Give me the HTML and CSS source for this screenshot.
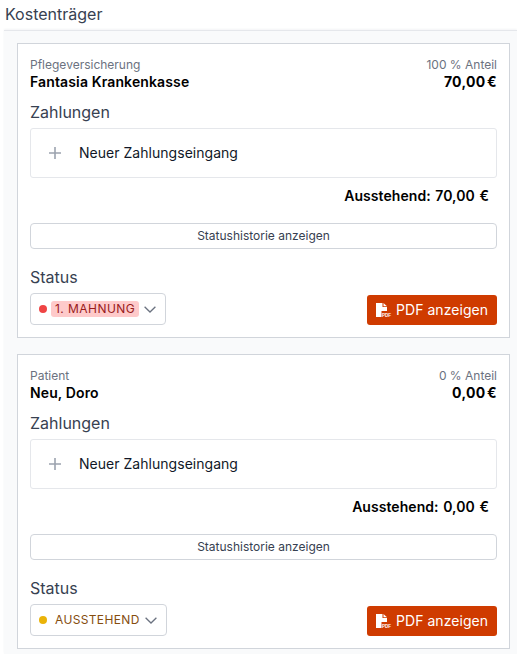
FILE: index.html
```html
<!DOCTYPE html>
<html lang="de">
<head>
<meta charset="utf-8">
<title>Kostenträger</title>
<link rel="stylesheet" href="styles.css">
</head>
<body>
<h2 class="title">Kostenträger</h2>
<div class="panel">
  <section class="card">
    <div class="head">
      <div class="head-side">
        <div class="muted">Pflegeversicherung</div>
        <div class="strong">Fantasia Krankenkasse</div>
      </div>
      <div class="head-side right">
        <div class="muted">100 % Anteil</div>
        <div class="strong price">70,00 €</div>
      </div>
    </div>
    <h3 class="label pay-label">Zahlungen</h3>
    <div class="add-box">
      <svg class="plus" width="14" height="14" viewBox="0 0 14 14"><path d="M7 1v12M1 7h12" fill="none" stroke="#9ca3af" stroke-width="1.6"/></svg>
      <span class="add-text">Neuer Zahlungseingang</span>
    </div>
    <div class="due">Ausstehend: 70,00 €</div>
    <button class="history">Statushistorie anzeigen</button>
    <h3 class="label status-label">Status</h3>
    <div class="foot">
      <div class="select">
        <span class="dot red"></span>
        <span class="badge badge-red">1. MAHNUNG</span>
        <svg class="chev" width="12" height="7" viewBox="0 0 12 7"><path d="M.6.8L6 6l5.4-5.2" fill="none" stroke="#6b7280" stroke-width="1.3"/></svg>
      </div>
      <button class="pdf">
        <svg class="pdf-icon" width="16" height="16" viewBox="0 0 16 16"><path d="M0 1h6.5v4H11v4H5.5v6H0z" fill="#fff"/><path d="M7.5 1L11 4.2H7.5z" fill="#fff"/><text x="6" y="15" class="pdf-mark">PDF</text></svg>
        <span>PDF anzeigen</span>
      </button>
    </div>
  </section>
  <section class="card">
    <div class="head">
      <div class="head-side">
        <div class="muted">Patient</div>
        <div class="strong">Neu, Doro</div>
      </div>
      <div class="head-side right">
        <div class="muted">0 % Anteil</div>
        <div class="strong price">0,00 €</div>
      </div>
    </div>
    <h3 class="label pay-label">Zahlungen</h3>
    <div class="add-box">
      <svg class="plus" width="14" height="14" viewBox="0 0 14 14"><path d="M7 1v12M1 7h12" fill="none" stroke="#9ca3af" stroke-width="1.6"/></svg>
      <span class="add-text">Neuer Zahlungseingang</span>
    </div>
    <div class="due">Ausstehend: 0,00 €</div>
    <button class="history">Statushistorie anzeigen</button>
    <h3 class="label status-label">Status</h3>
    <div class="foot">
      <div class="select">
        <span class="dot amber"></span>
        <span class="badge badge-amber">AUSSTEHEND</span>
        <svg class="chev" width="12" height="7" viewBox="0 0 12 7"><path d="M.6.8L6 6l5.4-5.2" fill="none" stroke="#6b7280" stroke-width="1.3"/></svg>
      </div>
      <button class="pdf">
        <svg class="pdf-icon" width="16" height="16" viewBox="0 0 16 16"><path d="M0 1h6.5v4H11v4H5.5v6H0z" fill="#fff"/><path d="M7.5 1L11 4.2H7.5z" fill="#fff"/><text x="6" y="15" class="pdf-mark">PDF</text></svg>
        <span>PDF anzeigen</span>
      </button>
    </div>
  </section>
</div>
</body>
</html>
```
FILE: styles.css
```css
* { box-sizing: border-box; }
html, body { margin: 0; padding: 0; background: #fff; overflow: hidden; }
body { width: 517px; height: 654px; font-family: Inter, "Liberation Sans", sans-serif; color: #111827; }
.title { margin: 0; padding: 4px 0 0 5px; height: 30px; font-size: 16px; line-height: 20px; font-weight: 400; color: #374151; }
.panel { margin-left: 4px; padding: 12px 7px 0 13px; background: #f9fafb; border-top: 1px solid #e5e7eb; box-shadow: 0 -1px 2px #f3f4f6; display: flex; flex-direction: column; gap: 16px; height: 624px; }
.card { background: #fff; border: 1px solid #d1d5db; padding: 12px; height: 295px; flex: none; }
.head { display: flex; justify-content: space-between; }
.head-side { display: flex; flex-direction: column; }
.right { align-items: flex-end; }
.muted { font-size: 12px; line-height: 16px; color: #6b7280; margin-top: 1px; }
.strong { font-size: 14px; line-height: 18px; font-weight: 600; letter-spacing: .13px; color: #000; }
.price { font-weight: 700; word-spacing: -2px; letter-spacing: .3px; }
.label { margin: 0; font-size: 16px; line-height: 18px; font-weight: 400; color: #374151; }
.pay-label { margin-top: 12px; }
.add-box { margin-top: 7px; height: 50px; display: flex; align-items: center; padding-left: 17px; border: 1px solid #e5e7eb; border-radius: 3px; font-size: 14px; letter-spacing: .03px; color: #111827; }
.add-text { margin-bottom: 2px; }
.plus { margin-right: 17px; }
.due { margin-top: 8px; height: 21px; padding-right: 8px; text-align: right; font-size: 14px; line-height: 20px; font-weight: 600; word-spacing: 1px; letter-spacing: .06px; color: #000; }
.history { display: block; width: 100%; margin-top: 16px; height: 26px; padding: 0; background: #fff; border: 1px solid #d1d5db; border-radius: 4px; font: 400 12px/24px Inter, "Liberation Sans", sans-serif; color: #374151; }
.status-label { margin-top: 19px; }
.foot { margin-top: 7px; display: flex; justify-content: space-between; align-items: flex-end; }
.select { display: flex; align-items: center; height: 32px; padding: 0 9px 0 8px; border: 1px solid #d1d5db; border-radius: 4px; background: #fff; }
.dot { width: 8px; height: 8px; border-radius: 50%; flex: none; margin-right: 4px; }
.red { background: #ef4444; }
.amber { background: #eab308; }
.badge { font-size: 12px; line-height: 16px; letter-spacing: .35px; padding: 0 4px; border-radius: 3px; }
.badge-red { background: #fecaca; color: #991b1b; letter-spacing: .45px; }
.badge-amber { color: #854d0e; padding-right: 0; }
.chev { margin-left: 5px; flex: none; }
.pdf { display: flex; align-items: center; height: 30px; width: 130px; padding: 0 0 0 9px; background: #cf3b00; border: 0; border-radius: 3px; color: #fff; font: 400 14px/20px Inter, "Liberation Sans", sans-serif; letter-spacing: .05px; }
.pdf-icon { margin-right: 4px; flex: none; }
.pdf-mark { font: 700 4.5px "Liberation Sans", sans-serif; fill: #fff; }
```
